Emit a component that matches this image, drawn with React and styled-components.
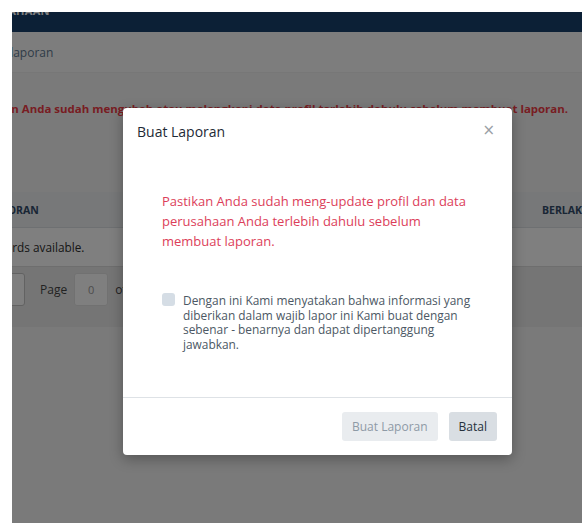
import React from 'react';
import styled, { createGlobalStyle } from 'styled-components';

const GlobalStyle = createGlobalStyle`
  html, body {
    margin: 0;
    padding: 0;
    background: #ffffff;
  }
  body {
    padding: 12px 0 0 12px;
    font-family: "Open Sans", "Noto Sans", sans-serif;
    overflow: hidden;
  }
`;

const Screen = styled.div`
  position: relative;
  height: 511px;
  overflow: hidden;
  background: #fdfdfd;
`;

const Page = styled.div`
  display: flex;
  flex-direction: column;
  height: 100%;
`;

const Navbar = styled.div`
  height: 20px;
  background: #18406c;
  overflow: hidden;
  color: #ffffff;
  font-size: 11px;
  font-weight: 700;
  letter-spacing: 0.3px;
  span {
    display: block;
    margin: -9px 0 0 -40px;
  }
`;

const Breadcrumb = styled.div`
  height: 40px;
  display: flex;
  align-items: center;
  background: #fbfbfb;
  border-bottom: 1px solid #eeeeee;
  color: #5f7890;
  font-size: 12px;
  span {
    margin-left: -31px;
  }
`;

const Main = styled.div`
  flex: 1;
  background: #f5f5f5;
  padding-top: 28px;
`;

const Warning = styled.div`
  display: flex;
  justify-content: flex-end;
  overflow: hidden;
  padding-right: 14px;
  color: #f03a45;
  font-size: 11.45px;
  font-weight: 700;
  white-space: nowrap;
`;

const Table = styled.div`
  margin-top: 76px;
  margin-left: -48px;
  width: 700px;
  background: #ffffff;
`;

const HeadRow = styled.div`
  height: 35px;
  display: flex;
  align-items: center;
  justify-content: space-between;
  background: #eef0f2;
  border-bottom: 1px solid #dde1e5;
  color: #324c6a;
  font-size: 10.5px;
  font-weight: 700;
`;

const HeadCell = styled.span`
  margin-left: ${p => p.$pad || 0}px;
  width: ${p => p.$w || 'auto'};
`;

const EmptyRow = styled.div`
  height: 38px;
  display: flex;
  align-items: center;
  padding-left: 5px;
  border-bottom: 1px solid #dcdcdc;
  color: #2e2e2e;
  font-size: 11.8px;
`;

const Pager = styled.div`
  height: 60px;
  display: flex;
  align-items: flex-start;
  padding-top: 6px;
  gap: 7px;
  background: #ebebeb;
  color: #454545;
  font-size: 12px;
  box-sizing: border-box;
  span {
    line-height: 33px;
  }
`;

const PagerBox = styled.div`
  width: ${p => p.$w}px;
  height: 33px;
  margin-right: ${p => p.$gap || 0}px;
  display: flex;
  align-items: center;
  justify-content: center;
  background: #ffffff;
  border: 1px solid ${p => (p.$soft ? '#e2e2e2' : '#c4c4c4')};
  border-radius: 3px;
  color: #9a9a9a;
  font-size: 11px;
  box-sizing: border-box;
`;

const Backdrop = styled.div`
  position: absolute;
  inset: 0;
  background: rgba(0, 0, 0, 0.5);
`;

const Modal = styled.div`
  position: absolute;
  left: 111px;
  top: 96px;
  width: 389px;
  height: 347px;
  display: flex;
  flex-direction: column;
  background: #ffffff;
  border-radius: 4px;
  box-shadow: 0 4px 14px rgba(0, 0, 0, 0.3);
  box-sizing: border-box;
`;

const ModalHeader = styled.div`
  height: 46px;
  display: flex;
  align-items: center;
  justify-content: space-between;
  padding: 0 17px 0 14px;
  box-sizing: border-box;
`;

const Title = styled.h5`
  margin: 0;
  padding-top: 1px;
  font-size: 14px;
  font-weight: 400;
  color: #1e2a36;
`;

const Close = styled.button`
  border: 0;
  padding: 0;
  background: none;
  color: #9aa0a6;
  font-family: "DejaVu Sans", sans-serif;
  font-size: 15px;
  line-height: 1;
  margin-top: -2px;
  cursor: pointer;
`;

const ModalBody = styled.div`
  flex: 1;
  padding: 37px 38px 0 39px;
`;

const Notice = styled.p`
  margin: 0;
  color: #dc3e5a;
  font-size: 13px;
  line-height: 20px;
`;

const Agreement = styled.label`
  display: flex;
  gap: 8px;
  margin-top: 42px;
  color: #4c5864;
  font-size: 11.9px;
  line-height: 14.5px;
`;

const Check = styled.span`
  flex: none;
  width: 13px;
  height: 13px;
  border-radius: 3px;
  background: #d5dde5;
`;

const ModalFooter = styled.div`
  display: flex;
  justify-content: flex-end;
  gap: 11px;
  padding: 14px 15px 14px;
  border-top: 1px solid #dee2e6;
`;

const Button = styled.button`
  height: 29px;
  padding: 0 10px;
  border: 0;
  border-radius: 3px;
  font-family: inherit;
  font-size: 12px;
  background: ${p => (p.$disabled ? '#e9ecef' : '#d9dee3')};
  color: ${p => (p.$disabled ? '#8e9aa6' : '#26313c')};
  cursor: ${p => (p.$disabled ? 'default' : 'pointer')};
`;

export default function App() {
  return (
    <>
      <GlobalStyle />
      <Screen>
        <Page>
          <Navbar><span>PERUSAHAAN</span></Navbar>
          <Breadcrumb><span>Buat laporan</span></Breadcrumb>
          <Main>
            <Warning>
              <span>Pastikan Anda sudah mengubah atau melengkapi data profil terlebih dahulu sebelum membuat laporan.</span>
            </Warning>
            <Table>
              <HeadRow>
                <HeadCell $pad={-6}>JENIS LAPORAN</HeadCell>
                <HeadCell $w="122px">BERLAKU</HeadCell>
              </HeadRow>
              <EmptyRow>No records available.</EmptyRow>
              <Pager>
                <PagerBox $w={61} $gap={8} />
                <span>Page</span>
                <PagerBox $w={34} $soft>0</PagerBox>
                <span>of 0</span>
              </Pager>
            </Table>
          </Main>
        </Page>
        <Backdrop />
        <Modal>
          <ModalHeader>
            <Title>Buat Laporan</Title>
            <Close aria-label="Tutup">×</Close>
          </ModalHeader>
          <ModalBody>
            <Notice>
              Pastikan Anda sudah meng-update profil dan data perusahaan Anda terlebih dahulu sebelum membuat laporan.
            </Notice>
            <Agreement>
              <Check />
              <span>
                Dengan ini Kami menyatakan bahwa informasi yang diberikan dalam wajib lapor ini Kami buat dengan sebenar - benarnya dan dapat dipertanggung jawabkan.
              </span>
            </Agreement>
          </ModalBody>
          <ModalFooter>
            <Button $disabled disabled>Buat Laporan</Button>
            <Button>Batal</Button>
          </ModalFooter>
        </Modal>
      </Screen>
    </>
  );
}
